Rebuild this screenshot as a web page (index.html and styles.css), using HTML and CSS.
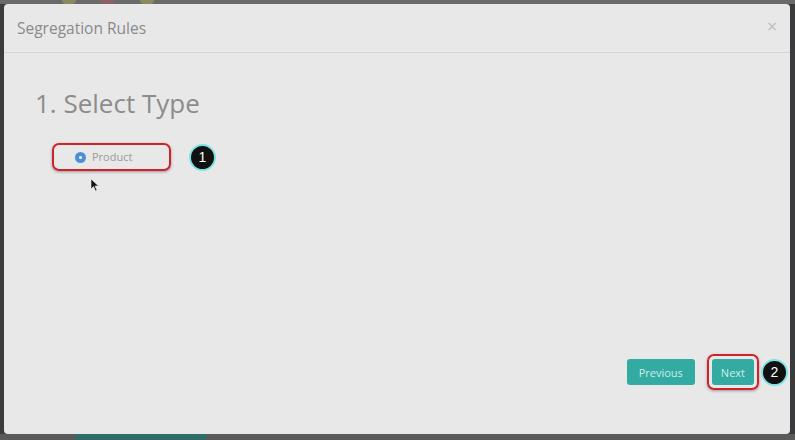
FILE: index.html
```html
<!DOCTYPE html>
<html lang="en">
<head>
    <meta charset="UTF-8">
    <title>Segregation Rules</title>
    <link rel="stylesheet" href="styles.css">
</head>
<body>
    <div class="backdrop-top">
        <span class="blob blob-a"></span>
        <span class="blob blob-b"></span>
        <span class="blob blob-c"></span>
    </div>
    <div class="modal">
        <div class="modal-header">
            <h4 class="modal-title">Segregation Rules</h4>
            <span class="close">&times;</span>
        </div>
        <div class="modal-body">
            <h2 class="step-title">1. Select Type</h2>
            <div class="option-row">
                <label class="highlight option">
                    <span class="radio"><span class="radio-dot"></span></span>
                    Product
                </label>
                <span class="badge">1</span>
                <svg class="cursor" width="10" height="14" viewBox="0 0 10 14">
                    <path d="M1 1 L1 11 L3.5 8.5 L5.5 13 L7 12.3 L5 8 L8.5 8 Z" fill="#111" stroke="#eee" stroke-width="0.6"/>
                </svg>
            </div>
        </div>
        <div class="modal-footer">
            <button class="btn">Previous</button>
            <span class="highlight next-wrap"><button class="btn">Next</button></span>
            <span class="badge badge-2">2</span>
        </div>
    </div>
    <div class="backdrop-bottom"><span class="bottom-tab"></span></div>
</body>
</html>
```
FILE: styles.css
```css
body {
    margin: 0;
    width: 795px;
    height: 440px;
    overflow: hidden;
    background: #3b3b3d;
    font-family: "Open Sans", sans-serif;
    position: relative;
}

.backdrop-top {
    height: 4px;
    background: #6a6a6a;
    position: relative;
}

.blob {
    position: absolute;
    top: 0;
    height: 4px;
    width: 14px;
    border-radius: 0 0 6px 6px;
}

.blob-a { left: 62px; background: #8b8a5e; }
.blob-b { left: 100px; background: #8c6166; }
.blob-c { left: 140px; background: #8d8a60; }

.modal {
    margin: 0 5px 0 4px;
    height: 430px;
    background: #e8e8e8;
    border-radius: 4px;
    display: flex;
    flex-direction: column;
    position: relative;
}

.modal-header {
    height: 48px;
    border-bottom: 1px solid #d6d6d6;
    display: flex;
    align-items: center;
    justify-content: space-between;
    padding: 0 12px 0 13px;
}

.modal-title {
    margin: 0;
    font-size: 15.5px;
    font-weight: normal;
    color: #8a8a8a;
}

.close {
    font-size: 14px;
    color: #bcbcbc;
    font-family: "DejaVu Sans", sans-serif;
    margin-top: -4px;
}

.modal-body {
    flex: 1;
    padding: 0 31px;
}

.step-title {
    margin: 33px 0 0 0;
    font-size: 26px;
    font-weight: normal;
    color: #8c8c8c;
    line-height: 34px;
}

.option-row {
    display: flex;
    align-items: center;
    margin: 23px 0 0 17px;
    position: relative;
}

.highlight {
    border: 2.5px solid #d0222a;
    border-radius: 7px;
    box-shadow: 0 1px 3px rgba(0, 0, 0, 0.35);
}

.option {
    width: 119px;
    height: 28px;
    box-sizing: border-box;
    display: flex;
    align-items: center;
    gap: 6px;
    padding: 0 0 1px 21px;
    font-size: 11px;
    color: #9a9a9a;
}

.radio {
    width: 11px;
    height: 11px;
    border-radius: 50%;
    background: #4a90d9;
    display: flex;
    align-items: center;
    justify-content: center;
    margin-top: 1px;
}

.radio-dot {
    width: 3px;
    height: 3px;
    border-radius: 50%;
    background: #fff;
}

.badge {
    width: 23px;
    height: 23px;
    border-radius: 50%;
    background: #111;
    border: 2px solid #7de3e3;
    color: #fff;
    font-family: "Liberation Sans", sans-serif;
    font-size: 14px;
    display: flex;
    align-items: center;
    justify-content: center;
    margin-left: 18px;
}

.cursor {
    position: absolute;
    left: 38px;
    top: 35px;
}

.modal-footer {
    display: flex;
    justify-content: flex-end;
    align-items: center;
    padding: 0 2px 44px 0;
}

.btn {
    background: #33aba3;
    color: #cdeeea;
    border: none;
    border-radius: 3px;
    font-family: "Open Sans", sans-serif;
    font-size: 11px;
    height: 26px;
    padding: 0 12px;
}

.next-wrap {
    display: flex;
    padding: 3px;
    margin-left: 12px;
}

.next-wrap .btn {
    padding: 0 9px;
}

.badge-2 {
    margin-left: 2px;
}

.backdrop-bottom {
    height: 6px;
    background: #5a5a5a;
    position: relative;
}

.bottom-tab {
    position: absolute;
    left: 75px;
    top: 0;
    width: 131px;
    height: 6px;
    background: #2f6e68;
}
```
